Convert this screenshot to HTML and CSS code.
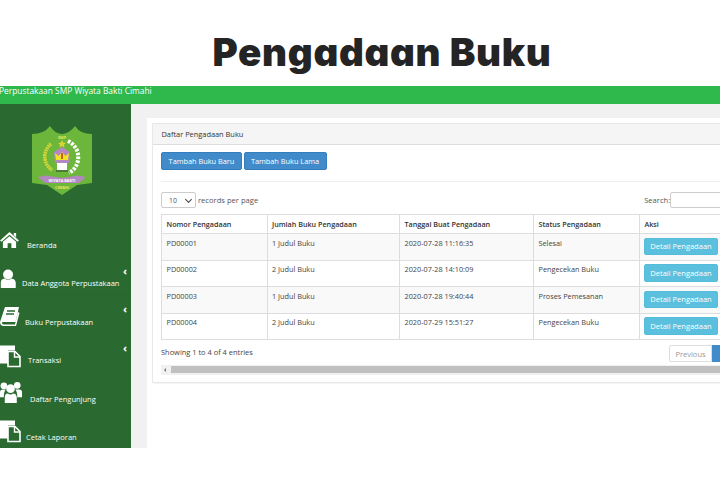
FILE: index.html
```html
<!DOCTYPE html>
<html lang="id">
<head>
<meta charset="utf-8">
<title>Pengadaan Buku</title>
<link rel="stylesheet" href="styles.css">
</head>
<body>
<h1 class="slide-title">Pengadaan Buku</h1>
<div class="shot">
  <div class="topbar">Perpustakaan SMP Wiyata Bakti Cimahi</div>
  <div class="app">
    <aside class="sidebar">
      <div class="logo">
        <svg class="crest" viewBox="0 0 60 70" width="60" height="70">
          <path d="M0 8 Q12 8 18 0 Q22 7 30 8 Q38 7 43 0 Q48 8 60 8 L60 57 L45 59 L30 69 L15 59 L0 57 Z" fill="#6cb63c"/>
          <path d="M19 18 A16 16 0 0 0 20 44" fill="none" stroke="#d6d637" stroke-width="3.500" stroke-dasharray="1.800 .6"/>
          <path d="M36 15 A18 18 0 0 1 37 47" fill="none" stroke="#fff" stroke-width="4" stroke-dasharray="2.600 1.300"/>
          <path d="M30 14 l1.200 2.600 2.800.3-2.100 1.900.6 2.800-2.500-1.500-2.500 1.500.6-2.800-2.100-1.900 2.800-.3z" fill="#d6d637"/>
          <path d="M30 21 L38 26 L37 37 L23 37 L22 26 Z" fill="#b387c0"/>
          <path d="M23 27 L26.500 30 L30 26 L33.500 30 L37 27 L36 34 L24 34 Z" fill="#f2e420"/>
          <rect x="29.200" y="27" width="1.600" height="6" fill="#c0392b"/>
          <rect x="25" y="37" width="10" height="7" fill="#fff"/>
          <path d="M24 44 H36 V46 H24 Z" fill="#4c7d35"/>
          <path d="M6 51 L14 49.500 L30 52 L46 49.500 L54 51 L47 57 L13 57 Z" fill="#b387c0"/>
          <text x="30" y="55.500" class="crest-text">WIYATA BAKTI</text>
          <text x="30" y="63" class="crest-text crest-yellow">CIMAHI</text>
          <text x="30" y="13" class="crest-text crest-yellow">SMP</text>
        </svg>
      </div>
      <nav class="menu">
        <a class="item item-home">
          <svg class="ico" viewBox="0 0 20 18" width="19" height="17"><path d="M10 1 L20 10 L18.500 11.500 L10 4 L1.500 11.500 L0 10 Z M14.500 2 H17 V6.500 L14.500 4.500 Z M10 5.500 L17 11.500 V18 H12 V13 H8 V18 H3 V11.500 Z" fill="#fff"/></svg>
          <span>Beranda</span>
        </a>
        <a class="item item-user">
          <svg class="ico" viewBox="0 0 17 21" width="17" height="19"><circle cx="8" cy="6" r="5.500" fill="#fff"/><path d="M0 21 V15 Q0 11 4 10.500 Q8 13.500 12 10.500 Q16 11 16.500 15 V21 Z" fill="#fff"/></svg>
          <span>Data Anggota Perpustakaan</span>
          <i class="chev">‹</i>
        </a>
        <a class="item item-book">
          <svg class="ico" viewBox="0 0 20 20" width="20" height="20"><path d="M5 1 H19 L15.500 16 H3 Q1.500 16 2 17.500 Q2.500 18.500 4 18.500 H15 L18 6 L19.500 7 L16 20 H3 Q0 19.500 0 16 Z" fill="#fff"/><path d="M7 5 H15 M6 8 H14" stroke="#2a6a30" stroke-width="1.500"/></svg>
          <span>Buku Perpustakaan</span>
          <i class="chev">‹</i>
        </a>
        <a class="item item-trans">
          <svg class="ico" viewBox="0 0 21 22" width="21" height="23"><path d="M0 0 H15 V5 H8 V18 H0 Z" fill="#fff"/><path d="M8 6 H15 L20 11 V21 H8 Z" fill="none" stroke="#fff" stroke-width="1.600"/><path d="M14.500 6 V11.500 H20" fill="none" stroke="#fff" stroke-width="1.400"/></svg>
          <span>Transaksi</span>
          <i class="chev">‹</i>
        </a>
        <a class="item item-visit">
          <svg class="ico" viewBox="0 0 24 24" width="23" height="23"><circle cx="4" cy="6" r="3.500" fill="#fff"/><circle cx="18" cy="5.500" r="3.500" fill="#fff"/><circle cx="11" cy="9" r="4.500" fill="#fff"/><path d="M0 18 V13 Q0 10 3 10 H6 Q4 12 4 18 Z M18 18 Q18 12 16 10 H20 Q23 10 23 13 V18 Z M5 24 V18 Q5 14 8 14 Q11 16 14 14 Q17 14 17.500 18 V24 Z" fill="#fff"/></svg>
          <span>Daftar Pengunjung</span>
        </a>
        <a class="item item-report">
          <svg class="ico" viewBox="0 0 21 22" width="21" height="23"><path d="M0 0 H15 V5 H8 V18 H0 Z" fill="#fff"/><path d="M8 6 H15 L20 11 V21 H8 Z" fill="none" stroke="#fff" stroke-width="1.600"/><path d="M14.500 6 V11.500 H20" fill="none" stroke="#fff" stroke-width="1.400"/></svg>
          <span>Cetak Laporan</span>
        </a>
      </nav>
    </aside>
    <main class="content">
      <div class="sheet">
        <section class="panel">
          <header class="panel-head">Daftar Pengadaan Buku</header>
          <div class="panel-body">
            <div class="actions">
              <button class="btn btn-blue">Tambah Buku Baru</button>
              <button class="btn btn-blue">Tambah Buku Lama</button>
            </div>
            <hr class="rule">
            <div class="controls">
              <label class="length"><span class="select-wrap"><select class="select"><option>10</option></select></span> records per page</label>
              <label class="search">Search:<input class="search-input" type="text"></label>
            </div>
            <table class="data">
              <colgroup><col class="c1"><col class="c2"><col class="c3"><col class="c4"><col class="c5"></colgroup>
              <thead>
                <tr><th>Nomor Pengadaan</th><th>Jumlah Buku Pengadaan</th><th>Tanggal Buat Pengadaan</th><th>Status Pengadaan</th><th>Aksi</th></tr>
              </thead>
              <tbody>
                <tr><td>PD00001</td><td>1 Judul Buku</td><td>2020-07-28 11:16:35</td><td>Selesai</td><td><button class="btn btn-info">Detail Pengadaan</button></td></tr>
                <tr><td>PD00002</td><td>2 Judul Buku</td><td>2020-07-28 14:10:09</td><td>Pengecekan Buku</td><td><button class="btn btn-info">Detail Pengadaan</button></td></tr>
                <tr><td>PD00003</td><td>1 Judul Buku</td><td>2020-07-28 19:40:44</td><td>Proses Pemesanan</td><td><button class="btn btn-info">Detail Pengadaan</button></td></tr>
                <tr><td>PD00004</td><td>2 Judul Buku</td><td>2020-07-29 15:51:27</td><td>Pengecekan Buku</td><td><button class="btn btn-info">Detail Pengadaan</button></td></tr>
              </tbody>
            </table>
            <div class="table-foot">
              <span>Showing 1 to 4 of 4 entries</span>
              <div class="pager"><span class="prev">Previous</span><span class="cur"></span></div>
            </div>
            <div class="scrollbar"><span class="arrow"></span><span class="thumb"></span></div>
          </div>
        </section>
      </div>
    </main>
  </div>
</div>
</body>
</html>
```

FILE: styles.css
```css
* { box-sizing: border-box; }
html, body { margin: 0; padding: 0; }
body {
  width: 720px;
  height: 480px;
  overflow: hidden;
  background: #fff;
  font-family: "Open Sans", "Liberation Sans", sans-serif;
  color: #333;
}
.slide-title {
  margin: 0;
  height: 86px;
  padding: 27px 0 0 44px;
  text-align: center;
  font-family: Inter, Lato, sans-serif;
  font-feature-settings: "cv11" 1;
  font-weight: 900;
  font-size: 38.500px;
  line-height: 50px;
  letter-spacing: 0.700px;
  color: #242424;
}
.shot { width: 720px; height: 362px; overflow: hidden; }
.topbar {
  height: 18px;
  background: #2fb84b;
  color: #fff;
  font-size: 8.400px;
  line-height: 10px;
  white-space: nowrap;
  margin-left: -1px;
}
.app { display: flex; height: 344px; }
.sidebar { width: 131px; flex: none; background: #2a6a30; color: #fff; }
.logo { height: 115px; padding: 22px 0 0 32px; }
.crest { display: block; }
.crest-text { font-size: 3.800px; font-weight: 700; text-anchor: middle; fill: #fff; font-family: "Open Sans", sans-serif; }
.crest-yellow { fill: #e6e65a; }
.menu { display: flex; flex-direction: column; }
.item {
  position: relative;
  height: 38.500px;
  display: flex;
  align-items: flex-end;
  padding-bottom: 6px;
  border-bottom: 1px solid #29672e;
  font-size: 7.500px;
  line-height: 12px;
  white-space: nowrap;
  color: #fff;
}
.ico { flex: none; align-self: flex-start; }
.item-home .ico { margin-top: 12px; margin-right: 8px; }
.item-user .ico { margin-top: 11px; margin-right: 5px; }
.item-book .ico { margin-top: 10px; margin-right: 5px; }
.item-trans .ico { margin-top: 10px; margin-right: 7px; }
.item-visit .ico { margin-top: 7px; margin-right: 7px; }
.item-report .ico { margin-top: 8.500px; margin-right: 5px; }
.chev {
  position: absolute;
  left: 123px;
  top: 7px;
  font-style: normal;
  font-size: 11px;
  line-height: 12px;
  font-weight: 700;
}
.content { flex: 1; min-width: 0; background: #f1f1f1; padding: 14px 0 0 16px; overflow: hidden; }
.sheet { background: #fff; height: 100%; padding: 5px 0 0 5px; width: 600px; }
.panel {
  width: 620px;
  height: 260px;
  border: 1px solid #e8e8e8;
  border-width: 1px 0 1px 1px;
  border-radius: 2px;
  box-shadow: 0 1px 1px rgba(0,0,0,.05);
}
.panel-head {
  height: 21px;
  background: #f5f5f5;
  border-bottom: 1px solid #ddd;
  font-size: 7.400px;
  line-height: 20px;
  padding-left: 8.500px;
  color: #333;
}
.panel-body { padding: 7px 0 0 8px; }
.actions { display: flex; gap: 1.500px; }
.btn {
  font-family: inherit;
  border-radius: 2px;
  color: #fff;
  padding: 0;
  text-align: center;
  white-space: nowrap;
  display: block;
}
.btn-blue {
  width: 81px;
  height: 18px;
  font-size: 7.350px;
  background: #428bca;
  border: 1px solid #357ebd;
}
.btn-blue + .btn-blue { width: 83px; }
.btn-info {
  width: 74px;
  height: 17.500px;
  font-size: 7.500px;
  background: #5bc0de;
  border: 1px solid #55bcd9;
}
.rule { margin: 11px 0 0; border: 0; border-top: 1px solid #eee; height: 0; width: 620px; }
.controls { display: flex; align-items: center; height: 16px; margin-top: 10px; font-size: 7.600px; color: #555; }
.length { display: flex; align-items: center; gap: 2px; }
.select-wrap { position: relative; display: block; height: 16px; }
.select-wrap::after {
  content: "";
  position: absolute;
  right: 5px;
  top: 4.500px;
  width: 4px;
  height: 4px;
  border: solid #444;
  border-width: 0 1px 1px 0;
  transform: rotate(45deg);
}
.select {
  appearance: none;
  display: block;
  width: 35px;
  height: 16px;
  font-family: inherit;
  font-size: 7px;
  background: #fff;
  color: #555;
  border: 1px solid #ccc;
  border-radius: 2px;
  padding: 0 0 0 7px;
}
.search { margin-left: 386px; display: flex; align-items: center; }
.search-input { width: 60px; height: 16px; border: 1px solid #ccc; border-radius: 2px; padding: 0; margin: 0; background: #fff; }
.data {
  margin-top: 6px;
  border-collapse: collapse;
  table-layout: fixed;
  width: 570px;
  font-size: 7.300px;
  border-left: 1px solid #ddd;
}
.c1 { width: 105.500px; }
.c2 { width: 132.500px; }
.c3 { width: 134px; }
.c4 { width: 106px; }
.c5 { width: 92px; }
.data th, .data td { border: 1px solid #ddd; border-width: 1px; text-align: left; vertical-align: top; padding: 0 0 0 4.500px; }
.data th { height: 19px; font-size: 7.200px; font-weight: 600; color: #333; line-height: 18px; }
.data td { height: 26.500px; line-height: 11px; padding-top: 3.500px; color: #444; }
.data td:last-child { padding: 3.500px 0 0 4px; }
.data tbody tr:nth-child(odd) { background: #f9f9f9; }
.table-foot { display: flex; height: 25px; width: 559px; align-items: flex-start; justify-content: space-between; font-size: 7.450px; color: #444; line-height: 25px; }
.pager { display: flex; margin-top: 5px; line-height: 16px; height: 17px; width: 51px; flex: none; }
.prev { width: 43px; flex: none; border: 1px solid #ddd; border-radius: 2px 0 0 2px; text-align: center; color: #999; background: #fff; font-size: 7.500px; }
.cur { width: 20px; flex: none; background: #428bca; border: 1px solid #428bca; }
.scrollbar { display: flex; align-items: stretch; height: 10px; width: 559px; background: #f1f1f1; }
.arrow { width: 10px; flex: none; position: relative; }
.arrow::before { content: ""; position: absolute; left: 3px; top: 3px; border: 2px solid transparent; border-right: 2px solid #777; border-left: 0; }
.thumb { flex: 1; background: #c0c0c0; margin: 1px 0 2px; }
```
